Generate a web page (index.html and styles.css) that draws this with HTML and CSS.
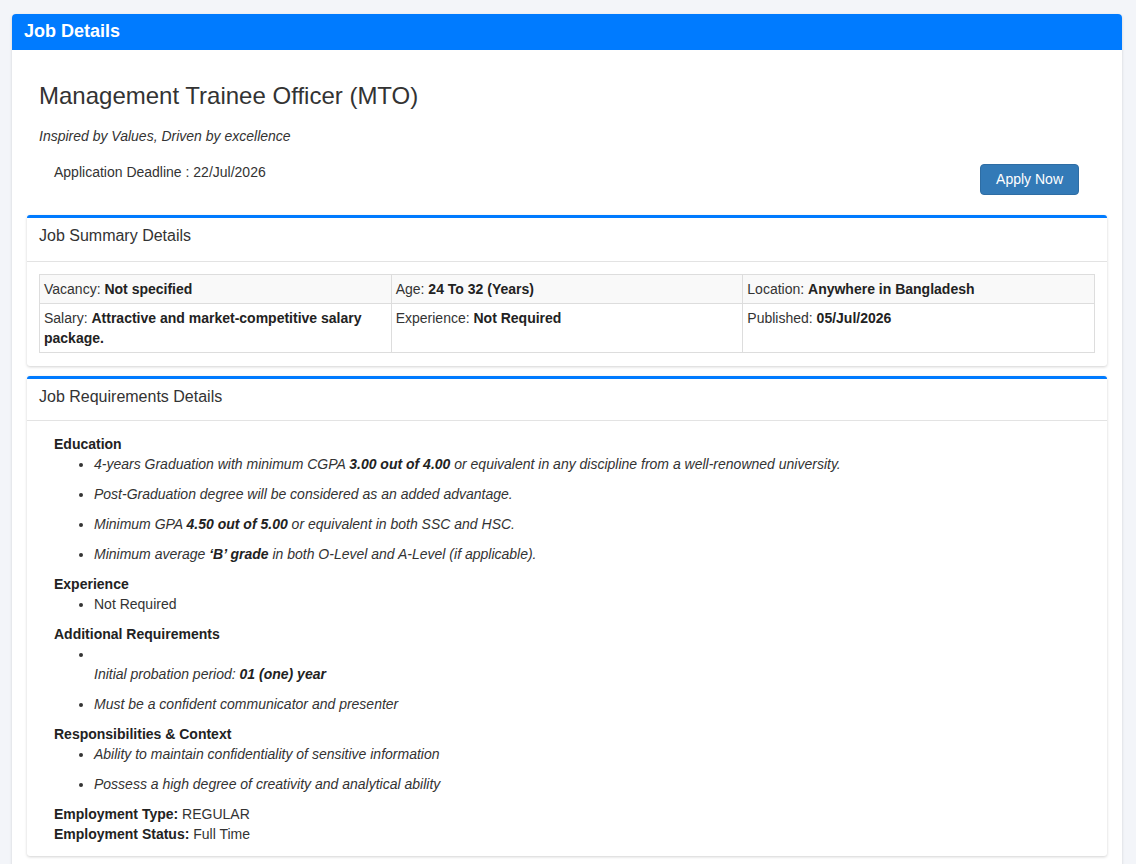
FILE: index.html
```html
<!DOCTYPE html>
<html lang="en">
<head>
<meta charset="utf-8">
<title>Job Details</title>
<link rel="stylesheet" href="styles.css">
</head>
<body>
<div class="page">
  <div class="outer-card">
    <div class="outer-header">Job Details</div>
    <div class="outer-body">
      <div class="intro">
        <h1 class="job-title">Management Trainee Officer (MTO)</h1>
        <p class="tagline">Inspired by Values, Driven by excellence</p>
        <div class="deadline-row">
          <span class="deadline">Application Deadline : 22/Jul/2026</span>
          <a class="apply-btn" href="#">Apply Now</a>
        </div>
      </div>

      <div class="card">
        <div class="card-header">Job Summary Details</div>
        <div class="card-body summary-body">
          <table class="summary-table">
            <tr class="striped">
              <td>Vacancy: <b>Not specified</b></td>
              <td>Age: <b>24 To 32 (Years)</b></td>
              <td>Location: <b>Anywhere in Bangladesh</b></td>
            </tr>
            <tr>
              <td>Salary: <b>Attractive and market-competitive salary package.</b></td>
              <td>Experience: <b>Not Required</b></td>
              <td>Published: <b>05/Jul/2026</b></td>
            </tr>
          </table>
        </div>
      </div>

      <div class="card">
        <div class="card-header card-header-tight">Job Requirements Details</div>
        <div class="card-body req-body">
          <div class="req-title">Education</div>
          <ul class="req-list">
            <li><p><i>4-years Graduation with minimum CGPA <b>3.00 out of 4.00</b> or equivalent in any discipline from a well-renowned university.</i></p></li>
            <li><p><i>Post-Graduation degree will be considered as an added advantage.</i></p></li>
            <li><p><i>Minimum GPA <b>4.50 out of 5.00</b> or equivalent in both SSC and HSC.</i></p></li>
            <li><p><i>Minimum average <b>‘B’ grade</b> in both O-Level and A-Level (if applicable).</i></p></li>
          </ul>
          <div class="req-title">Experience</div>
          <ul class="req-list">
            <li>Not Required</li>
          </ul>
          <div class="req-title">Additional Requirements</div>
          <ul class="req-list">
            <li><br><p><i>Initial probation period: <b>01 (one) year</b></i></p></li>
            <li><p><i>Must be a confident communicator and presenter</i></p></li>
          </ul>
          <div class="req-title">Responsibilities &amp; Context</div>
          <ul class="req-list">
            <li><p><i>Ability to maintain confidentiality of sensitive information</i></p></li>
            <li><p><i>Possess a high degree of creativity and analytical ability</i></p></li>
          </ul>
          <div class="emp-line"><b>Employment Type:</b> REGULAR</div>
          <div class="emp-line"><b>Employment Status:</b> Full Time</div>
        </div>
      </div>
    </div>
  </div>
</div>
</body>
</html>
```

FILE: styles.css
```css
html, body {
  margin: 0;
  padding: 0;
}
body {
  background: #f3f5f9;
  font-family: "Liberation Sans", Arial, sans-serif;
  font-size: 14px;
  line-height: 20px;
  color: #333;
}
.page {
  padding: 14px 14px 0 12px;
}
.outer-card {
  width: 1110px;
  background: #fff;
  border-radius: 4px 4px 0 0;
  box-shadow: 0 1px 3px rgba(0, 0, 0, 0.15);
}
.outer-header {
  background: #007bff;
  color: #fff;
  font-weight: bold;
  font-size: 18px;
  line-height: 20px;
  padding: 7px 12px 9px 12px;
  border-radius: 4px 4px 0 0;
}
.outer-body {
  padding: 22px 15px 20px 15px;
}
.intro {
  padding: 0 13px 0 12px;
}
.job-title {
  margin: 8px 0 0 0;
  font-size: 24px;
  line-height: 32px;
  font-weight: normal;
  color: #333;
}
.tagline {
  margin: 14px 0 0 0;
  font-style: italic;
}
.deadline-row {
  display: flex;
  justify-content: space-between;
  align-items: flex-start;
  margin-top: 16px;
  padding-left: 15px;
  padding-right: 15px;
}
.deadline {
  display: block;
  line-height: 20px;
}
.apply-btn {
  display: inline-block;
  margin-top: 2px;
  background: #337ab7;
  border: 1px solid #2e6da4;
  border-radius: 4px;
  color: #fff;
  text-decoration: none;
  font-size: 14px;
  line-height: 20px;
  padding: 4px 15px 5px 15px;
}
.card {
  background: #fff;
  border-top: 3px solid #007bff;
  border-radius: 3px;
  box-shadow: 0 1px 3px rgba(0, 0, 0, 0.18);
  margin-top: 20px;
}
.card + .card {
  margin-top: 10px;
}
.card-header {
  font-size: 16px;
  line-height: 20px;
  padding: 8px 12px 15px 12px;
  border-bottom: 1px solid #e3e3e3;
  color: #333;
}
.card-header-tight {
  padding-bottom: 13px;
}
.summary-body {
  padding: 12px 12px 13px 12px;
}
.summary-table {
  width: 100%;
  border-collapse: collapse;
  table-layout: fixed;
}
.summary-table td {
  border: 1px solid #ddd;
  padding: 4px 4px 4px 4px;
  vertical-align: top;
  color: #333;
}
.summary-table tr.striped td {
  background: #f9f9f9;
  padding-bottom: 4px;
}
.summary-table b {
  color: #222;
}
.req-body {
  padding: 13px 12px 12px 27px;
}
.req-title {
  font-weight: bold;
  color: #222;
}
.req-list {
  margin: 0 0 10px 0;
  padding-left: 40px;
}
.req-list p {
  margin: 0 0 10px 0;
}
.req-list b {
  color: #222;
}
.emp-line b {
  color: #222;
}
```
